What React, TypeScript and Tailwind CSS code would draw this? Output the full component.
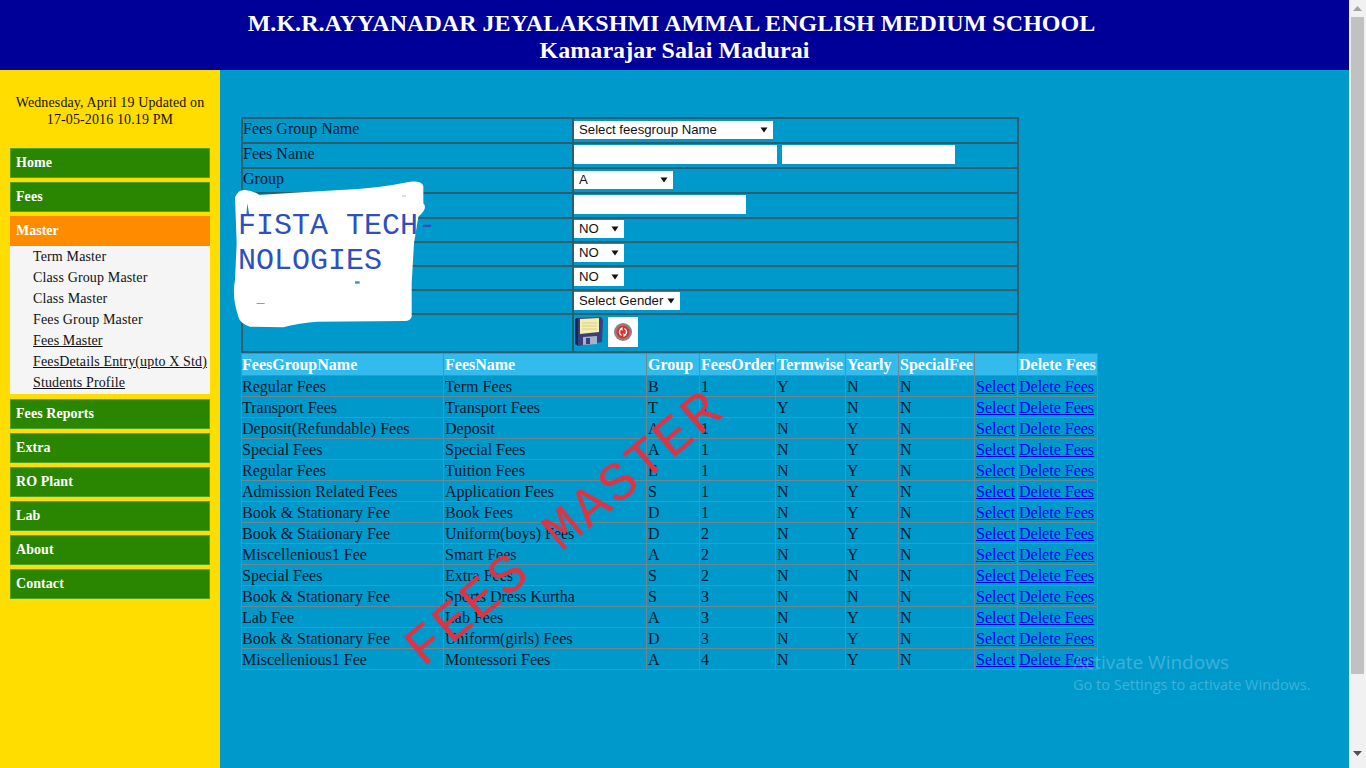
const serif = { fontFamily: '"Liberation Serif", serif' }

const feesRows = [
  ['Regular Fees', 'Term Fees', 'B', '1', 'Y', 'N', 'N'],
  ['Transport Fees', 'Transport Fees', 'T', '1', 'Y', 'N', 'N'],
  ['Deposit(Refundable) Fees', 'Deposit', 'A', '1', 'N', 'Y', 'N'],
  ['Special Fees', 'Special Fees', 'A', '1', 'N', 'Y', 'N'],
  ['Regular Fees', 'Tuition Fees', 'E', '1', 'N', 'Y', 'N'],
  ['Admission Related Fees', 'Application Fees', 'S', '1', 'N', 'Y', 'N'],
  ['Book & Stationary Fee', 'Book Fees', 'D', '1', 'N', 'Y', 'N'],
  ['Book & Stationary Fee', 'Uniform(boys) Fees', 'D', '2', 'N', 'Y', 'N'],
  ['Miscellenious1 Fee', 'Smart Fees', 'A', '2', 'N', 'Y', 'N'],
  ['Special Fees', 'Extra Fees', 'S', '2', 'N', 'N', 'N'],
  ['Book & Stationary Fee', 'Sports Dress Kurtha', 'S', '3', 'N', 'N', 'N'],
  ['Lab Fee', 'Lab Fees', 'A', '3', 'N', 'Y', 'N'],
  ['Book & Stationary Fee', 'Uniform(girls) Fees', 'D', '3', 'N', 'Y', 'N'],
  ['Miscellenious1 Fee', 'Montessori Fees', 'A', '4', 'N', 'Y', 'N'],
]

const headers = ['FeesGroupName', 'FeesName', 'Group', 'FeesOrder', 'Termwise', 'Yearly', 'SpecialFee', '', 'Delete Fees']
const colWidths = [202, 203, 53, 76, 70, 53, 76, 43, 80]

const subMenu = [
  { label: 'Term Master', line: false },
  { label: 'Class Group Master', line: false },
  { label: 'Class Master', line: false },
  { label: 'Fees Group Master', line: false },
  { label: 'Fees Master', line: true },
  { label: 'FeesDetails Entry(upto X Std)', line: true },
  { label: 'Students Profile', line: true },
]

function MenuItem({ label }: { label: string }) {
  return (
    <div className="flex h-[30px] w-[200px] items-center border border-[#4fa32a] bg-[#2a8600] pb-[2px] pl-[5px] text-[14px] font-bold tracking-[0.06px] text-white">
      {label}
    </div>
  )
}

function Sidebar() {
  return (
    <aside className="flex w-[220px] shrink-0 flex-col items-center bg-[#ffdd00] pt-[24px] text-[14px] text-[#1a1200]">
      <p className="h-[54px] w-[200px] text-center leading-[17px] tracking-[0.12px]">
        Wednesday, April 19 Updated on 17-05-2016 10.19 PM
      </p>
      <div className="flex flex-col gap-[4px]">
        <MenuItem label="Home" />
        <MenuItem label="Fees" />
        <div>
          <div className="flex h-[30px] w-[200px] items-center bg-[#ff8c00] pb-[2px] pl-[6px] font-bold text-white">Master</div>
          <ul className="h-[148px] bg-[#f5f5f5] pl-[23px] text-[14px] tracking-[0.14px] text-[#111]">
            {subMenu.map((item) => (
              <li key={item.label} className={item.line ? 'h-[21px] leading-[21px] underline' : 'h-[21px] leading-[21px]'}>
                {item.label}
              </li>
            ))}
          </ul>
        </div>
        <div className="mt-[1px] flex flex-col gap-[4px]">
          <MenuItem label="Fees Reports" />
          <MenuItem label="Extra" />
          <MenuItem label="RO Plant" />
          <MenuItem label="Lab" />
          <MenuItem label="About" />
          <MenuItem label="Contact" />
        </div>
      </div>
    </aside>
  )
}

function Select({ label, width }: { label: string; width: string }) {
  return (
    <div className={`relative h-[18px] bg-white ${width}`}>
      <select
        defaultValue={label}
        className="block h-[18px] w-full appearance-none bg-transparent pl-[5px] text-[13.2px] leading-[18px] text-[#111]"
        style={{ fontFamily: '"Liberation Sans", sans-serif' }}
      >
        <option>{label}</option>
      </select>
      <svg className="absolute top-[6px] right-[5px]" width="8" height="6" viewBox="0 0 8 6">
        <path d="M0.5 0.5 H7.5 L4 5.5 Z" fill="#111" />
      </svg>
    </div>
  )
}

function FormRow({ label, height, children }: { label?: string; height: string; children: React.ReactNode }) {
  return (
    <tr className={height}>
      <td className="w-[331px] border border-[#2f5d70] pb-[3px] align-middle text-[16px] leading-[18px] text-[#00182e]">{label}</td>
      <td className="border border-[#2f5d70] pb-[2px] align-middle leading-[18px]">{children}</td>
    </tr>
  )
}

function FloppyIcon() {
  return (
    <svg width="29" height="30" viewBox="0 0 29 30">
      <path d="M2 1 L27 0 L29 3 L28 25 L4 29 L1 27 Z" fill="#3a3f7c" />
      <path d="M1 2 L4 1 L4 28 L1 27 Z" fill="#1c2150" />
      <path d="M6 2 L25 1 L25 15 L6 17 Z" fill="#f4eeb0" />
      <path d="M8 6 H23 M8 9 H23 M8 12 H23" stroke="#d8cf86" strokeWidth="1" />
      <path d="M9 20 L23 19 L23 27 L9 28 Z" fill="#aab0c8" />
      <rect x="12" y="21" width="4" height="6" fill="#3a3f7c" />
    </svg>
  )
}

function ResetIcon() {
  return (
    <div className="ml-[5px] flex h-[30px] w-[30px] items-center justify-center bg-white">
      <svg width="20" height="20" viewBox="0 0 20 20">
        <circle cx="10" cy="10" r="9" fill="#8d8386" />
        <circle cx="10" cy="10" r="6.5" fill="#d8322f" />
        <path d="M8.5 6.5 A4 4 0 0 0 8.5 13.5 M11.5 13.5 A4 4 0 0 0 11.5 6.5" stroke="#fff" strokeWidth="1.4" fill="none" />
        <path d="M9.5 5 V9 L7 6.5 Z M10.5 15 V11 L13 13.5 Z" fill="#fff" />
      </svg>
    </div>
  )
}

function FeesForm() {
  return (
    <table className="w-[778px] border-separate border-spacing-0 border border-[#2f5d70]">
      <tbody>
        <FormRow label="Fees Group Name" height="h-[25px]">
          <Select label="Select feesgroup Name" width="w-[199px]" />
        </FormRow>
        <FormRow label="Fees Name" height="h-[25px]">
          <div className="flex gap-[5px]">
            <input className="h-[19px] w-[203px] bg-white" />
            <input className="h-[19px] w-[173px] bg-white" />
          </div>
        </FormRow>
        <FormRow label="Group" height="h-[25px]">
          <Select label="A" width="w-[99px]" />
        </FormRow>
        <FormRow height="h-[25px]">
          <input className="block h-[19px] w-[172px] bg-white" />
        </FormRow>
        <FormRow height="h-[24px]">
          <Select label="NO" width="w-[50px]" />
        </FormRow>
        <FormRow height="h-[24px]">
          <Select label="NO" width="w-[50px]" />
        </FormRow>
        <FormRow height="h-[24px]">
          <Select label="NO" width="w-[50px]" />
        </FormRow>
        <FormRow height="h-[24px]">
          <Select label="Select Gender" width="w-[106px]" />
        </FormRow>
        <FormRow height="h-[38px]">
          <div className="flex items-start pb-[1px]">
            <FloppyIcon />
            <ResetIcon />
          </div>
        </FormRow>
      </tbody>
    </table>
  )
}

function FeesTable() {
  return (
    <table className="table-fixed border-collapse text-[16px] text-[#00182e]" style={{ width: 856 }}>
      <colgroup>
        {colWidths.map((w, i) => (
          <col key={i} style={{ width: w }} />
        ))}
      </colgroup>
      <thead>
        <tr className="h-[22px] bg-[#33bbee] font-bold text-white">
          {headers.map((h, i) => (
            <th
              key={i}
              className={
                i === 0
                  ? 'overflow-hidden border border-[#72868f] p-0 text-left leading-[20px] whitespace-nowrap'
                  : 'overflow-hidden border border-[#72868f] p-0 pl-[1px] text-left leading-[20px] whitespace-nowrap'
              }
            >
              {h}
            </th>
          ))}
        </tr>
      </thead>
      <tbody>
        {feesRows.map((row, i) => (
          <tr key={i} className="h-[21px]">
            {row.map((cell, j) => (
              <td
                key={j}
                className={
                  j === 0
                    ? 'border border-[#72868f] p-0 pt-[1px] leading-[18px] whitespace-nowrap'
                    : 'border border-[#72868f] p-0 pt-[1px] pl-[1px] leading-[18px] whitespace-nowrap'
                }
              >
                {cell}
              </td>
            ))}
            <td className="border border-[#72868f] p-0 pt-[1px] pl-[1px] leading-[18px] whitespace-nowrap">
              <a href="#" className="text-[#0000ee] underline">Select</a>
            </td>
            <td className="border border-[#72868f] p-0 pt-[1px] pl-[1px] leading-[18px] whitespace-nowrap">
              <a href="#" className="text-[#0000ee] underline">Delete Fees</a>
            </td>
          </tr>
        ))}
      </tbody>
    </table>
  )
}

function Blob() {
  return (
    <svg className="absolute top-[110px] left-[230px]" width="300" height="240" viewBox="0 0 900 720">
      <path
        d="M15 262 Q25 238 45 240 Q70 242 88 255 Q200 248 330 240 Q440 236 540 215 Q575 212 580 228 L580 280 Q595 295 565 320 L552 400 L545 520 L545 620 Q540 633 525 633 L260 635 Q200 640 160 652 L60 650 Q30 640 25 620 Q5 560 15 510 L20 400 Z"
        fill="#fff"
      />
      <path d="M52 280 L58 316 L49 316 Z" fill="#1f7fb8" />
      <rect x="375" y="514" width="14" height="7" fill="#3a8fb8" />
      <rect x="80" y="579" width="24" height="3" fill="#9a9a9a" />
      <rect x="516" y="256" width="12" height="4" fill="#cfcfcf" />
    </svg>
  )
}

function Scrollbar() {
  return (
    <div className="flex w-[17px] shrink-0 flex-col items-center bg-[#f1f1f1]">
      <svg className="mt-[6px]" width="9" height="5" viewBox="0 0 9 5">
        <path d="M4.5 0 L9 5 H0 Z" fill="#a3a3a3" />
      </svg>
      <div className="mt-[6px] h-[657px] w-[13px] bg-[#c1c1c1]" />
      <svg className="mt-[77px]" width="9" height="5" viewBox="0 0 9 5">
        <path d="M0 0 H9 L4.5 5 Z" fill="#505050" />
      </svg>
    </div>
  )
}

export default function App() {
  return (
    <div className="relative flex h-[768px] w-[1366px] overflow-hidden" style={serif}>
      <div className="flex w-[1349px] shrink-0 flex-col">
        <header className="h-[70px] bg-[#000099] pt-[10px] pr-[6px] text-center text-[24px] leading-[27px] font-bold tracking-[0.04px] text-white">
          <div>M.K.R.AYYANADAR JEYALAKSHMI AMMAL ENGLISH MEDIUM SCHOOL</div>
          <div className="pl-[6px]">Kamarajar Salai Madurai</div>
        </header>
        <div className="flex flex-1">
          <Sidebar />
          <main className="flex-1 bg-[#0099cc] pt-[47px] pl-[21px]">
            <FeesForm />
            <FeesTable />
          </main>
        </div>
      </div>
      <Scrollbar />

      <Blob />
      <div
        className="absolute top-[209px] left-[238px] w-[210px] text-[30px] leading-[35px] text-[#2d4fc0]"
        style={{ fontFamily: '"Liberation Mono", monospace' }}
      >
        <div>FISTA TECH-</div>
        <div>NOLOGIES</div>
      </div>

      <div
        className="absolute top-[502px] left-[368px] origin-center -rotate-[40deg] text-[55px] leading-[56px] tracking-[3px] whitespace-nowrap text-[#dd3344]"
        style={{ fontFamily: '"Liberation Mono", monospace' }}
      >
        FEES MASTER
      </div>

      <div
        className="absolute top-[649px] left-[1073px] text-[#ffffff]/25"
        style={{ fontFamily: '"Open Sans", sans-serif' }}
      >
        <div className="text-[19px] leading-[26px]">Activate Windows</div>
        <div className="text-[14.5px] leading-[20px]">Go to Settings to activate Windows.</div>
      </div>
    </div>
  )
}
